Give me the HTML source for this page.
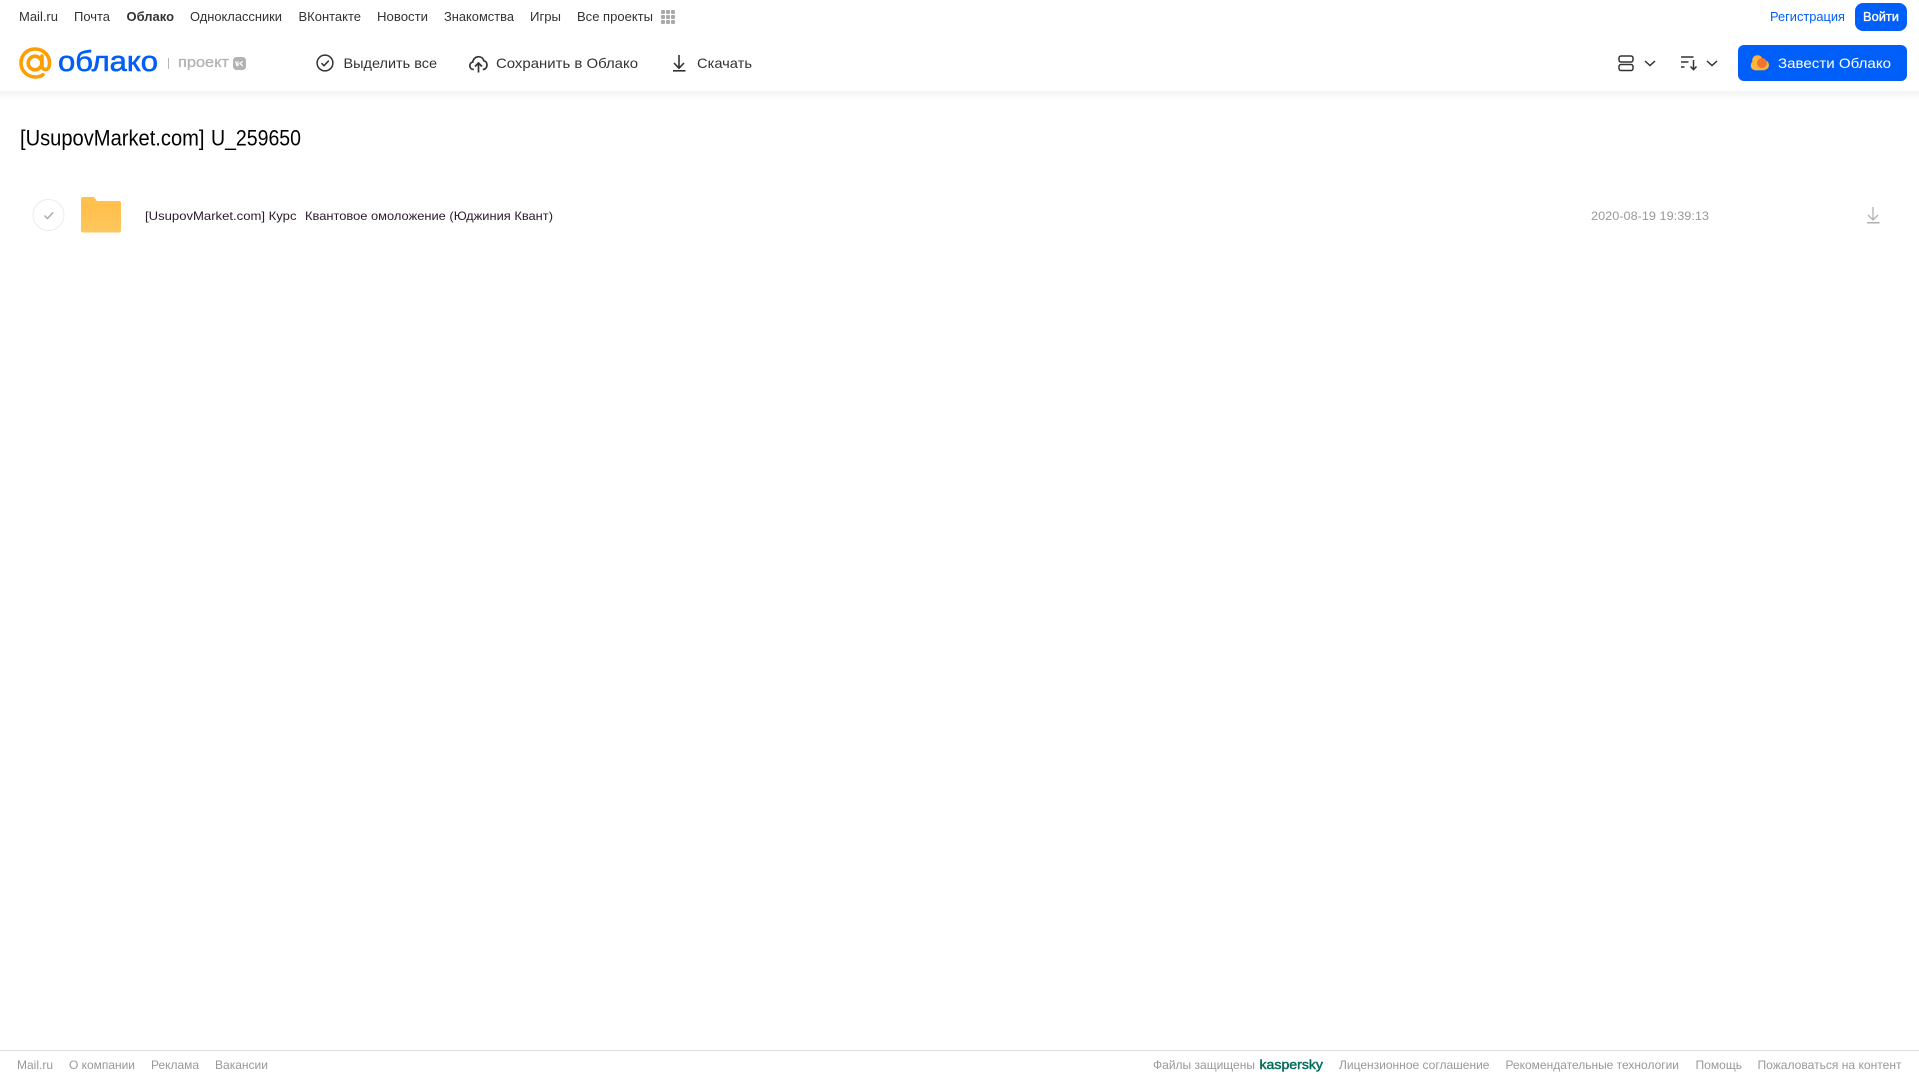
<!DOCTYPE html>
<html lang="ru"><head><meta charset="utf-8"><title>Облако</title>
<style>
html,body{margin:0;padding:0;width:1919px;height:1079px;background:#fff;overflow:hidden}
svg{display:block;position:absolute;left:0;top:0}
text{font-family:"Liberation Sans",sans-serif;white-space:pre}
.n{font-size:13px;fill:#333}
.t{font-size:14px;fill:#333}
.f{font-size:12px;fill:#999}
</style></head><body>
<svg width="1919" height="1079" viewBox="0 0 1919 1079" xmlns="http://www.w3.org/2000/svg">
<defs>
<linearGradient id="sh" x1="0" y1="0" x2="0" y2="1"><stop offset="0" stop-color="#f3f3f3"/><stop offset="1" stop-color="#fff"/></linearGradient>
<linearGradient id="fo" x1="0" y1="0" x2="0" y2="1"><stop offset="0" stop-color="#ffbf4a"/><stop offset="1" stop-color="#ffc75f"/></linearGradient>
</defs>
<rect x="0" y="91" width="1919" height="9" fill="url(#sh)"/>

<text class="n" x="19" y="21" textLength="39" lengthAdjust="spacingAndGlyphs">Mail.ru</text>
<text class="n" x="74" y="21" textLength="36" lengthAdjust="spacingAndGlyphs">Почта</text>
<text class="n" x="126.500" y="21" textLength="47.500" lengthAdjust="spacingAndGlyphs" font-weight="700">Облако</text>
<text class="n" x="190" y="21" textLength="92" lengthAdjust="spacingAndGlyphs">Одноклассники</text>
<text class="n" x="298.500" y="21" textLength="62.500" lengthAdjust="spacingAndGlyphs">ВКонтакте</text>
<text class="n" x="377" y="21" textLength="51" lengthAdjust="spacingAndGlyphs">Новости</text>
<text class="n" x="444" y="21" textLength="70" lengthAdjust="spacingAndGlyphs">Знакомства</text>
<text class="n" x="530" y="21" textLength="31" lengthAdjust="spacingAndGlyphs">Игры</text>
<text class="n" x="577" y="21" textLength="76" lengthAdjust="spacingAndGlyphs">Все проекты</text>
<g fill="#aaa">
<rect x="661" y="10" width="4" height="4" rx="1"/><rect x="666" y="10" width="4" height="4" rx="1"/><rect x="671" y="10" width="4" height="4" rx="1"/>
<rect x="661" y="15" width="4" height="4" rx="1"/><rect x="666" y="15" width="4" height="4" rx="1"/><rect x="671" y="15" width="4" height="4" rx="1"/>
<rect x="661" y="20" width="4" height="4" rx="1"/><rect x="666" y="20" width="4" height="4" rx="1"/><rect x="671" y="20" width="4" height="4" rx="1"/>
</g>

<text x="1770" y="21" font-size="13" fill="#005ff9" textLength="75" lengthAdjust="spacingAndGlyphs">Регистрация</text>
<rect x="1855" y="3" width="52" height="28" rx="8" fill="#005ff9"/>
<text x="1863" y="21" font-size="13" fill="#fff" stroke="#fff" stroke-width=".35" textLength="36" lengthAdjust="spacingAndGlyphs">Войти</text>

<!-- logo -->
<g fill="none" stroke="#ff9e00" stroke-width="3.600">
<circle cx="35" cy="63" r="6.800"/>
<path d="M42 56v9.500c0 2.500 1.500 4 3.500 4 2.500 0 4-2.500 4-6.500 0-8-6.500-14-14.500-14S21 55 21 63s6.500 14 14.500 14c3 0 5.500-.8 7.500-2.300" stroke-linecap="round"/>
</g>
<text x="58" y="71" font-size="29" fill="#005ff9" stroke="#005ff9" stroke-width=".6" textLength="100" lengthAdjust="spacingAndGlyphs">облако</text>
<rect x="168" y="58" width="1" height="11" fill="#b5b5b5"/>
<text x="178" y="67" font-size="14.500" fill="#b3b3b3" stroke="#b3b3b3" stroke-width=".3" textLength="51" lengthAdjust="spacingAndGlyphs">проект</text>
<rect x="233" y="57" width="13" height="13" rx="3.500" fill="#b3b3b3"/>
<path d="M235.500 61.300l1.500 4.200h1v-4.200M242.500 61.300l-2.500 2.200 2.700 2.500" fill="none" stroke="#fff" stroke-width="1.200"/>

<!-- toolbar -->
<circle cx="325" cy="63" r="7.900" fill="none" stroke="#333" stroke-width="1.500"/>
<path d="M321.500 63.200l2.500 2.500 4.800-5" fill="none" stroke="#333" stroke-width="1.500"/>
<text class="t" x="343.500" y="68" textLength="93.500" lengthAdjust="spacingAndGlyphs">Выделить все</text>

<path d="M473.800 69.500c-2.400 0-4-1.600-4-3.800 0-1.800 1.200-3.300 3-3.700.4-3 2.700-5.300 5.700-5.300 2.600 0 4.700 1.700 5.400 4.100 1.900.4 3.100 2.100 3.100 4.200 0 2.400-1.700 4.500-4.200 4.500" fill="none" stroke="#333" stroke-width="1.700"/>
<path d="M478.500 72.500v-9M475 66.500l3.500-3.500 3.500 3.500" fill="none" stroke="#333" stroke-width="1.700"/>
<text class="t" x="496" y="68" textLength="142" lengthAdjust="spacingAndGlyphs">Сохранить в Облако</text>

<path d="M679 55v13M674 63l5 5.200 5-5.200" fill="none" stroke="#333" stroke-width="1.600"/>
<rect x="673" y="70" width="12.500" height="1.600" fill="#333"/>
<text class="t" x="697" y="68" textLength="55" lengthAdjust="spacingAndGlyphs">Скачать</text>

<g fill="none" stroke="#333" stroke-width="1.500">
<rect x="1619" y="56" width="14" height="6" rx="2"/>
<rect x="1619" y="64.500" width="14" height="6" rx="2"/>
<path d="M1645 61l5 4.500 5-4.500"/>
<path d="M1681 57h12.500M1681 62h7.500M1681 67h3.500"/>
<path d="M1693.500 60v9.500M1690.500 66.500l3 3.200 3-3.200"/>
<path d="M1707 61l5 4.500 5-4.500"/>
</g>

<rect x="1738" y="45" width="169" height="36" rx="6" fill="#005ff9"/>
<g fill="#ffb53d">
<circle cx="1757.500" cy="60.500" r="5.300"/>
<circle cx="1755.500" cy="65.500" r="4.800"/>
<circle cx="1764" cy="65" r="5"/>
<rect x="1755.500" y="62" width="9" height="8.300"/>
</g>
<circle cx="1762" cy="63" r="5" fill="#f4722b"/>
<text x="1778" y="68" font-size="14" fill="#fff" textLength="113" lengthAdjust="spacingAndGlyphs">Завести Облако</text>

<!-- title -->
<text x="20" y="145.500" font-size="22" fill="#000" textLength="184.500" lengthAdjust="spacingAndGlyphs">[UsupovMarket.com]</text>
<text x="211" y="145.500" font-size="22" fill="#000" textLength="90" lengthAdjust="spacingAndGlyphs">U_259650</text>

<!-- row -->
<circle cx="48.500" cy="215" r="15.500" fill="#fff" stroke="#ececec" stroke-width="1"/>
<path d="M44.500 215.500l3 3 5.500-6" fill="none" stroke="#a5a5a5" stroke-width="1.300"/>
<path d="M83 197h9.500c1.500 0 2.300.6 3 1.700l1.300 2.300H119c1.200 0 2 .8 2 2v27c0 1.600-.9 2.500-2.500 2.500h-35c-1.600 0-2.500-.9-2.500-2.500V199c0-1.200.8-2 2-2z" fill="#ffc24f"/>
<rect x="81" y="204" width="40" height="28.500" rx="2" fill="url(#fo)"/>
<text x="145" y="220" font-size="12" fill="#2b1a2b" textLength="151.500" lengthAdjust="spacingAndGlyphs">[UsupovMarket.com] Курс</text>
<text x="305" y="220" font-size="12" fill="#2b1a2b" textLength="248" lengthAdjust="spacingAndGlyphs">Квантовое омоложение (Юджиния Квант)</text>
<text x="1591" y="220" font-size="12" fill="#999" textLength="118" lengthAdjust="spacingAndGlyphs">2020-08-19 19:39:13</text>
<path d="M1873 207v13M1868 215l5 5 5-5" fill="none" stroke="#b0b0b0" stroke-width="1.300"/>
<rect x="1867" y="222" width="12.500" height="1.500" fill="#b0b0b0"/>

<!-- footer -->
<rect x="0" y="1050" width="1919" height="1" fill="#ddd"/>
<text class="f" x="17" y="1069" textLength="36" lengthAdjust="spacingAndGlyphs">Mail.ru</text>
<text class="f" x="69" y="1069" textLength="66" lengthAdjust="spacingAndGlyphs">О компании</text>
<text class="f" x="151" y="1069" textLength="48" lengthAdjust="spacingAndGlyphs">Реклама</text>
<text class="f" x="215" y="1069" textLength="53" lengthAdjust="spacingAndGlyphs">Вакансии</text>
<text class="f" x="1153" y="1069" textLength="102" lengthAdjust="spacingAndGlyphs">Файлы защищены</text>
<text x="1259.500" y="1069" font-size="13" fill="#006d5c" stroke="#006d5c" stroke-width=".45" textLength="63.500" lengthAdjust="spacingAndGlyphs">kaspersky</text>
<text class="f" x="1339" y="1069" textLength="150.500" lengthAdjust="spacingAndGlyphs">Лицензионное соглашение</text>
<text class="f" x="1505.500" y="1069" textLength="173.500" lengthAdjust="spacingAndGlyphs">Рекомендательные технологии</text>
<text class="f" x="1695.500" y="1069" textLength="46.500" lengthAdjust="spacingAndGlyphs">Помощь</text>
<text class="f" x="1757.500" y="1069" textLength="144" lengthAdjust="spacingAndGlyphs">Пожаловаться на контент</text>
</svg>
</body></html>
